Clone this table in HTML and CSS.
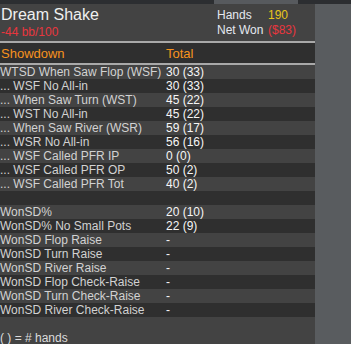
FILE: index.html
```html
<!DOCTYPE html>
<html>
<head>
<meta charset="utf-8">
<link rel="stylesheet" href="styles.css">
</head>
<body>
<div class="topbar"><div class="tb-a"></div><div class="tb-b"></div><div class="tb-c"></div></div>
<div class="panel">
  <div class="header">
    <div class="player">
      <div class="name">Dream Shake</div>
      <div class="rate">-44 bb/100</div>
    </div>
    <div class="summary">
      <div class="srow"><span class="slabel">Hands</span><span class="sval yellow">190</span></div>
      <div class="srow"><span class="slabel">Net Won</span><span class="sval red">($83)</span></div>
    </div>
  </div>
  <div class="colhead"><span class="c1">Showdown</span><span class="c2">Total</span></div>
  <div class="rows">
    <div class="row"><span class="c1">WTSD When Saw Flop (WSF)</span><span class="c2">30 (33)</span></div>
    <div class="row"><span class="c1">... WSF No All-in</span><span class="c2">30 (33)</span></div>
    <div class="row"><span class="c1">... When Saw Turn (WST)</span><span class="c2">45 (22)</span></div>
    <div class="row"><span class="c1">... WST No All-in</span><span class="c2">45 (22)</span></div>
    <div class="row"><span class="c1">... When Saw River (WSR)</span><span class="c2">59 (17)</span></div>
    <div class="row"><span class="c1">... WSR No All-in</span><span class="c2">56 (16)</span></div>
    <div class="row"><span class="c1">... WSF Called PFR IP</span><span class="c2">0 (0)</span></div>
    <div class="row"><span class="c1">... WSF Called PFR OP</span><span class="c2">50 (2)</span></div>
    <div class="row"><span class="c1">... WSF Called PFR Tot</span><span class="c2">40 (2)</span></div>
    <div class="row"><span class="c1"></span><span class="c2"></span></div>
    <div class="row"><span class="c1">WonSD%</span><span class="c2">20 (10)</span></div>
    <div class="row"><span class="c1">WonSD% No Small Pots</span><span class="c2">22 (9)</span></div>
    <div class="row"><span class="c1">WonSD Flop Raise</span><span class="c2">-</span></div>
    <div class="row"><span class="c1">WonSD Turn Raise</span><span class="c2">-</span></div>
    <div class="row"><span class="c1">WonSD River Raise</span><span class="c2">-</span></div>
    <div class="row"><span class="c1">WonSD Flop Check-Raise</span><span class="c2">-</span></div>
    <div class="row"><span class="c1">WonSD Turn Check-Raise</span><span class="c2">-</span></div>
    <div class="row"><span class="c1">WonSD River Check-Raise</span><span class="c2">-</span></div>
  </div>
  <div class="footer">( ) = # hands</div>
</div>
</body>
</html>
```
FILE: styles.css
```css
html, body {
  margin: 0;
  padding: 0;
}
body {
  background: #595c5f;
  font-family: "Liberation Sans", Arial, sans-serif;
  width: 351px;
  height: 344px;
  overflow: hidden;
}
.topbar {
  display: flex;
  height: 4px;
}
.tb-a { width: 214px; background: #2c2e31; }
.tb-b { width: 84px; background: #575a5e; }
.tb-c { flex: 1; background: #2c2e31; }
.panel {
  width: 315px;
  background: #434343;
}
.header {
  height: 37px;
  display: flex;
  border-bottom: 2px solid #a9a9a9;
  box-sizing: content-box;
}
.player {
  width: 216px;
  padding-left: 1px;
}
.name {
  color: #f0f0f0;
  font-size: 16px;
  line-height: 18px;
  margin-top: 2px;
}
.rate {
  color: #e8363e;
  font-size: 12px;
  line-height: 14px;
  margin-top: 1px;
}
.summary {
  padding-top: 4px;
}
.srow {
  display: flex;
  font-size: 12px;
  line-height: 15px;
}
.slabel {
  width: 51px;
  color: #e4e8f0;
}
.yellow { color: #e8c51a; }
.red { color: #e8363e; }
.colhead {
  display: flex;
  height: 20px;
  align-items: center;
  background: #2f2f2f;
  border-bottom: 2px solid #a9a9a9;
  color: #f7931e;
  font-size: 13px;
}
.c1 {
  width: 165px;
  padding-left: 1px;
  white-space: nowrap;
}
.rows .row:nth-child(odd) { background: #434343; }
.rows .row:nth-child(even) { background: #2f2f2f; }
.row {
  display: flex;
  height: 14px;
  line-height: 14px;
  font-size: 12px;
}
.row .c1 {
  color: #d2d2d2;
  padding-left: 0;
  width: 166px;
}
.row .c2 {
  color: #f6f6f6;
}
.footer {
  height: 27px;
  color: #dcdcdc;
  font-size: 12px;
  line-height: 14px;
  padding-top: 14px;
  box-sizing: border-box;
}
```
